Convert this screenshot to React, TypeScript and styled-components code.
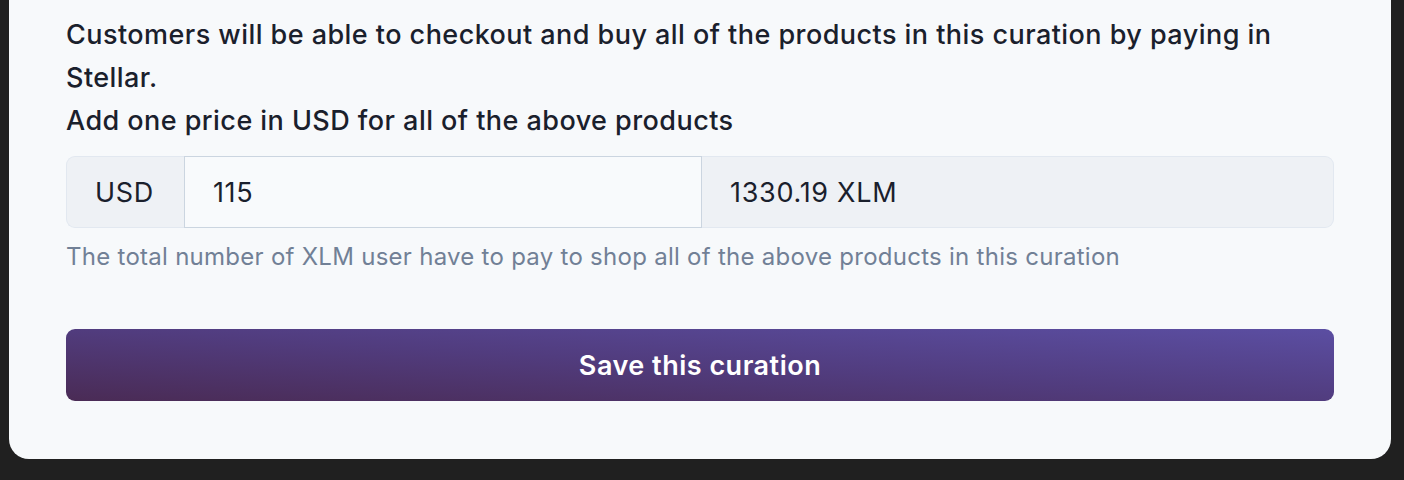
import React from "react";
import styled, { createGlobalStyle } from "styled-components";

const Global = createGlobalStyle`
  html, body { margin: 0; padding: 0; background: #202020; }
  body { font-family: Inter, "Noto Sans", sans-serif; -webkit-font-smoothing: antialiased; }
`;

const Page = styled.div`
  padding: 0 13px 21px 9px;
  background: #202020;
  height: 480px;
  box-sizing: border-box;
  display: flex;
  flex-direction: column;
  justify-content: flex-end;
  overflow: hidden;
`;

const Card = styled.section`
  flex-shrink: 0;
  background: #f7f9fb;
  border-radius: 20px;
  padding: 40px 57px 58px 57px;
  display: flex;
  flex-direction: column;
  color: #1a202c;
`;

const Paragraph = styled.p`
  margin: 0;
  font-size: 27px;
  line-height: 43px;
  letter-spacing: 0.45px;
  font-weight: 500;
  color: #1a202c;
`;

const Group = styled.div`
  margin-top: 14px;
  display: flex;
  height: 72px;
`;

const Addon = styled.div<{ $side: "left" | "right" }>`
  display: flex;
  align-items: center;
  box-sizing: border-box;
  background: #eef1f5;
  border: 1px solid #e2e8f0;
  font-size: 27px;
  letter-spacing: 0.7px;
  color: #1a202c;
  ${({ $side }) =>
    $side === "left"
      ? `border-radius: 9px 0 0 9px; border-right: none; width: 118px; justify-content: center; padding: 0 2px 0 0;`
      : `border-radius: 0 9px 9px 0; border-left: none; flex: 1; padding: 0 28px;`}
`;

const Input = styled.input`
  width: 518px;
  box-sizing: border-box;
  border: 1px solid #cbd5e0;
  background: #f8fafc;
  font-family: inherit;
  font-size: 27px;
  letter-spacing: 0.6px;
  color: #1a202c;
  padding: 0 28px;
  outline: none;
  height: 72px;
`;

const Helper = styled.p`
  margin: 11px 0 0;
  font-size: 24px;
  line-height: 36px;
  letter-spacing: 0.27px;
  color: #718096;
`;

const SaveButton = styled.button`
  margin-top: 54px;
  height: 72px;
  border: none;
  border-radius: 9px;
  background: linear-gradient(to top right, #4a2b55 0%, #513c7e 50%, #5b4ea2 100%);
  color: #ffffff;
  font-family: inherit;
  font-size: 27px;
  letter-spacing: 0.5px;
  font-weight: 600;
  cursor: pointer;
`;

export default function App() {
  return (
    <>
      <Global />
      <Page>
        <Card>
          <Paragraph>
            Customers will be able to checkout and buy all of the products in this curation by paying in Stellar.
          </Paragraph>
          <Paragraph>Add one price in USD for all of the above products</Paragraph>
          <Group>
            <Addon $side="left">USD</Addon>
            <Input defaultValue="115" />
            <Addon $side="right">1330.19 XLM</Addon>
          </Group>
          <Helper>The total number of XLM user have to pay to shop all of the above products in this curation</Helper>
          <SaveButton>Save this curation</SaveButton>
        </Card>
      </Page>
    </>
  );
}
